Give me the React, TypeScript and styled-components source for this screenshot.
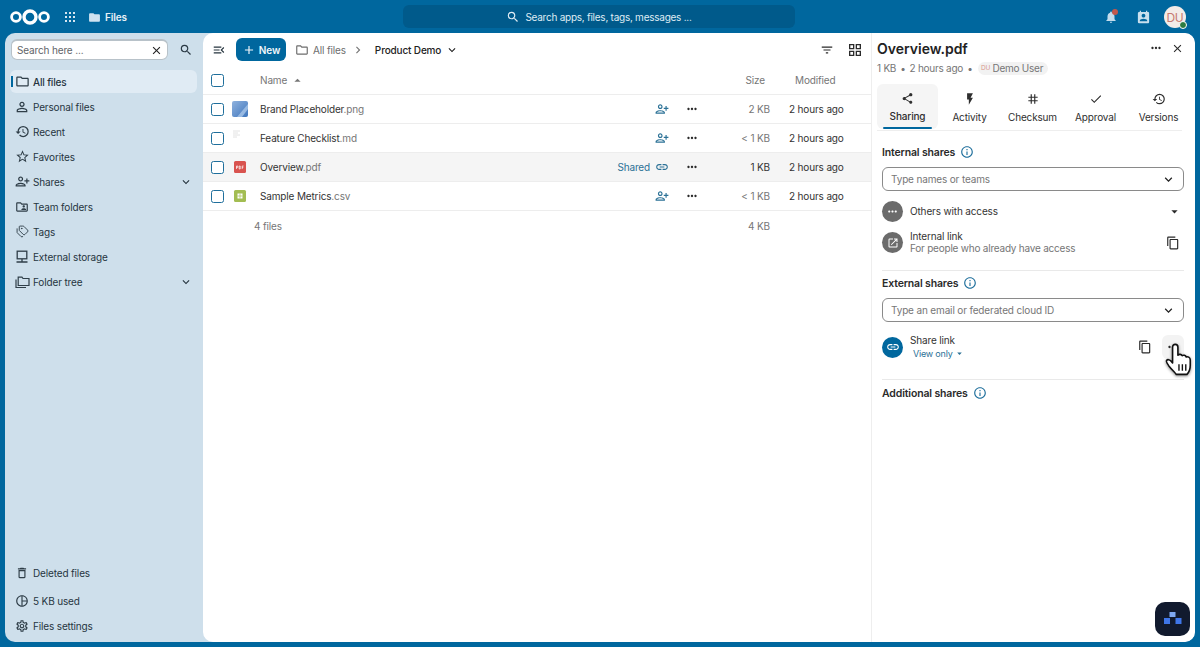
import React from "react";
import styled, { createGlobalStyle } from "styled-components";
import {
  MdAdd, MdArrowDropDown, MdArrowDropUp, MdCheck, MdChevronRight, MdClose, MdContentCopy, MdExpandMore,
  MdFilterList, MdFlashOn, MdHistory, MdInfoOutline, MdLink, MdMenuOpen, MdMoreHoriz, MdNotifications,
  MdOpenInNew, MdOutlineDelete, MdOutlineFolder, MdOutlineFolderShared, MdOutlineGridView, MdOutlinePieChart,
  MdOutlineSettings, MdPermContactCalendar, MdPersonAddAlt, MdPersonOutline, MdRestore, MdSearch, MdShare, MdStarBorder, MdFolder, MdTag,
} from "react-icons/md";
import { Tags } from "lucide-react";

const Global = createGlobalStyle`
  html, body { margin: 0; padding: 0; height: 100%; overflow: hidden; background: #00679e; }
  body { font-family: Inter, "Liberation Sans", sans-serif; font-size: 10px; letter-spacing: -0.15px; color: #222; -webkit-font-smoothing: antialiased; }
  * { box-sizing: border-box; }
`;

const Page = styled.div`
  width: 1200px; height: 647px; display: flex; flex-direction: column;
  background: #00679e; padding: 0 5px 5px; position: relative;
`;
const Header = styled.header`
  height: 33px; flex: none; display: grid; grid-template-columns: 398px 392px 1fr; align-items: center; color: #fff; padding-top: 1px;
`;
const HeaderLeft = styled.div`
  display: flex; align-items: center; padding-left: 5px; height: 100%;
`;
const AppGrid = styled.svg` margin-left: 15px; width: 10px; height: 10px; `;
const FilesFolder = styled.span` display: flex; margin-left: 13px; color: #cfe3f1; `;
const AppName = styled.span` margin-left: 4px; font-size: 10px; font-weight: 600; color: #e8f1f7; `;
const GlobalSearch = styled.div`
  height: 23px; background: #005a8b; border-radius: 6px; display: flex; align-items: center; justify-content: center;
  gap: 5px; color: #dfecf4; font-size: 10px; font-weight: 400; letter-spacing: -0.25px; margin-top: -1px;
`;
const HeaderRight = styled.div`
  display: flex; align-items: center; justify-content: flex-end; height: 100%; padding-right: 9px;
`;
const BellWrap = styled.span`
  position: relative; display: flex; color: #c4dcec; margin-right: 18px;
  &::after { content: ""; position: absolute; right: 0; top: -1px; width: 6px; height: 6px; border-radius: 50%; background: #c1574c; }
`;
const Contacts = styled.span` display: flex; color: #c9e0ee; margin-right: 13px; `;
const Avatar = styled.span`
  position: relative; width: 22px; height: 22px; border-radius: 50%; background: #f3ece8; color: #c77a70;
  display: flex; align-items: center; justify-content: center; font-size: 12px; letter-spacing: -0.3px;
`;
const StatusDot = styled.span`
  position: absolute; right: -1px; bottom: -1px; width: 8px; height: 8px; border-radius: 50%;
  background: #2d7b41; border: 1.5px solid #fff;
`;

const Body = styled.div`
  flex: 1; min-height: 0; display: flex; background: #cedfeb; border-radius: 10px; overflow: hidden;
`;
const Sidebar = styled.aside`
  width: 198px; flex: none; display: flex; flex-direction: column; padding: 6px 6px 5px 5px;
`;
const SearchRow = styled.div` display: flex; align-items: center; height: 21px; margin-left: 1px; `;
const SearchField = styled.div`
  width: 157px; height: 21px; background: #fff; border-radius: 6px; border: 1px solid #b8c2c9; border-top-width: 2px;
  display: flex; align-items: center; justify-content: space-between; padding: 0 4px 0 5px; color: #5f6468; font-size: 10px;
`;
const SearchButton = styled.span` display: flex; margin-left: 11px; color: #2b3a45; `;
const Nav = styled.nav` margin-top: 10px; display: flex; flex-direction: column; gap: 2px; `;
const NavItem = styled.div<{ $active?: boolean }>`
  position: relative; height: 23px; display: flex; align-items: center; padding: 0 4px 0 4px; gap: 3px;
  border-radius: 6px; color: #26353f; font-size: 10px; font-weight: ${p => (p.$active ? 500 : 400)};
  background: ${p => (p.$active ? "#e0ebf4" : "transparent")};
  ${p => p.$active ? `&::before { content: ""; position: absolute; left: 1px; top: 6px; width: 2px; height: 11px; background: #00679e; }` : ""}
`;
const NavIcon = styled.span` width: 16px; height: 16px; display: flex; align-items: center; justify-content: center; color: #2f3e48; flex: none; `;
const NavLabel = styled.span` flex: 1; `;
const NavSpacer = styled.div` flex: 1; `;
const NavFoot = styled.div<{ $gap: number }>` margin-top: ${p => p.$gap}px; `;

const Main = styled.main`
  flex: 1; min-width: 0; display: flex; background: #fff; border-radius: 10px; overflow: hidden;
`;
const Files = styled.section` flex: 1; min-width: 0; display: flex; flex-direction: column; `;
const Toolbar = styled.div`
  height: 33px; flex: none; display: flex; align-items: center; padding: 0 8px 0 9px;
`;
const ToggleBtn = styled.span` display: flex; color: #26353f; margin-right: 10px; `;
const NewButton = styled.span`
  width: 50px; height: 23px; border-radius: 6px; background: #00679e; color: #f1f7fb; display: flex; align-items: center; justify-content: center;
  gap: 3px; font-weight: 600; font-size: 10px;
`;
const Crumb = styled.span<{ $strong?: boolean }>`
  display: flex; align-items: center; gap: 4px; font-size: 10px; color: ${p => (p.$strong ? "#222" : "#6d6d6d")};
  font-weight: ${p => (p.$strong ? 500 : 400)}; margin-left: ${p => (p.$strong ? "10px" : "9px")};
`;
const CrumbSep = styled.span` display: flex; color: #777; margin-left: 5px; `;
const ToolbarSpacer = styled.div` flex: 1; `;
const ToolBtn = styled.span` display: flex; color: #2a2a2a; margin-left: 13px; `;

const rowCols = "29px 28px 1fr 67px 30px 64px 100px";
const HeadRow = styled.div`
  height: 29px; flex: none; display: grid; grid-template-columns: ${rowCols}; align-items: center;
  border-bottom: 1px solid #ededed; color: #767676; font-size: 10px;
`;
const FileRow = styled.div<{ $active?: boolean }>`
  height: 29px; flex: none; display: grid; grid-template-columns: ${rowCols}; align-items: center;
  border-bottom: 1px solid #ededed; background: ${p => (p.$active ? "#f5f5f5" : "#fff")};
`;
const FootRow = styled.div`
  height: 29px; flex: none; display: grid; grid-template-columns: 51px 1fr 64px 100px; align-items: center; color: #767676;
`;
const CheckCell = styled.span` display: flex; justify-content: flex-end; padding-right: 8px; `;
const Check = styled.span` width: 13px; height: 13px; border: 1.5px solid #1f6f9c; border-radius: 2.5px; background: #fff; `;
const ThumbCell = styled.span` display: flex; `;
const NameHead = styled.span` display: flex; align-items: center; gap: 3px; color: #767676; `;
const FileName = styled.span` color: #333; font-size: 10px; `;
const Ext = styled.span` color: #767676; `;
const StatusCell = styled.span`
  display: flex; align-items: center; justify-content: flex-end; gap: 5px; color: #2b7196; padding-right: 8px; font-size: 10px;
`;
const MoreCell = styled.span` display: flex; justify-content: center; color: #2a2a2a; `;
const SizeCell = styled.span<{ $dark?: boolean }>`
  text-align: right; padding-right: 1px; color: ${p => (p.$dark ? "#333" : "#767676")}; font-size: 10px;
`;
const ModCell = styled.span` padding-left: 18px; color: #333; font-size: 10px; `;
const HeadSize = styled.span` text-align: right; padding-right: 6px; `;
const HeadMod = styled.span` padding-left: 24px; `;

const Details = styled.aside`
  width: 324px; flex: none; border-left: 1px solid #eeeeee; display: flex; flex-direction: column; padding: 5px 11px 0 5px;
`;
const TitleRow = styled.div` display: flex; align-items: center; height: 20px; `;
const Title = styled.h1` flex: 1; margin: 0; font-size: 14px; font-weight: 600; letter-spacing: 0; color: #222; `;
const TitleAction = styled.span` display: flex; color: #2a2a2a; margin-left: 8px; `;
const MetaRow = styled.div`
  display: flex; align-items: center; height: 20px; color: #767676; font-size: 10px; gap: 4px; letter-spacing: -0.25px;
`;
const UserChip = styled.span`
  display: flex; align-items: center; gap: 2px; height: 13px; background: #f2f2f2; border-radius: 7px; padding: 0 5px 0 3px; margin-left: 1px;
`;
const MiniDU = styled.span` color: #d99a90; font-size: 6.5px; width: 10px; text-align: center; `;
const Tabs = styled.div`
  display: grid; grid-template-columns: 61px repeat(4, 63px); margin-top: 6px; margin-right: 2px; height: 47px; border-bottom: 1px solid #eee;
`;
const Tab = styled.div<{ $active?: boolean }>`
  position: relative; height: 45px; border-radius: 6px; display: flex; flex-direction: column; align-items: center; padding-top: 8px; gap: 5px;
  font-size: 10px; color: #2f2f2f; font-weight: ${p => (p.$active ? 500 : 400)}; background: ${p => (p.$active ? "#f5f5f5" : "transparent")};
  ${p => p.$active ? `&::after { content: ""; position: absolute; left: 6px; right: 6px; bottom: 0; height: 2px; border-radius: 1px; background: #00679e; }` : ""}
`;
const Section = styled.section<{ $divider?: boolean; $pt: number; $mt?: number }>`
  margin: ${p => p.$mt ?? 0}px 0 0 5px; padding-top: ${p => p.$pt}px; ${p => p.$divider ? "border-top: 1px solid #e9e9e9;" : ""}
`;
const SectionHead = styled.h2`
  margin: 0; display: flex; align-items: center; gap: 5px; height: 16px; font-size: 10.5px; font-weight: 600; color: #2a2a2a;
`;
const InfoIcon = styled.span` display: flex; color: #1f6f9c; `;
const Combo = styled.div`
  height: 24px; margin-top: 7px; border: 1px solid #8a8a8a; border-radius: 6px; display: flex; align-items: center; justify-content: space-between;
  padding: 0 7px 0 8px; color: #767676; font-size: 10px;
`;
const ComboIcon = styled.span` display: flex; color: #222; `;
const ShareRow = styled.div<{ $h: number; $mt?: number }>`
  height: ${p => p.$h}px; margin-top: ${p => p.$mt ?? 0}px; display: flex; align-items: center; gap: 7px;
`;
const Round = styled.span<{ $blue?: boolean }>`
  width: 21px; height: 21px; border-radius: 50%; flex: none; display: flex; align-items: center; justify-content: center; color: #fff;
  background: ${p => (p.$blue ? "#00679e" : "#6b6b6b")};
`;
const ShareText = styled.div` flex: 1; display: flex; flex-direction: column; color: #333; line-height: 11.5px; font-size: 10px; `;
const Sub = styled.span` color: #767676; letter-spacing: -0.22px; `;
const ViewOnly = styled.span` display: flex; align-items: center; gap: 1px; color: #2b7196; margin-top: 2px; margin-left: 3px; font-size: 9px; letter-spacing: -0.2px; `;
const RowIcon = styled.span<{ $mr?: number }>` display: flex; color: #2a2a2a; margin-right: ${p => p.$mr ?? 0}px; `;
const HoverBtn = styled.span`
  width: 22px; height: 24px; border-radius: 6px; background: #f3f3f3; display: flex; align-items: center; justify-content: center; color: #2a2a2a;
`;
const Cursor = styled.svg`
  position: absolute; left: 1164px; top: 343px; width: 31px; height: 33px; filter: drop-shadow(0 1px 1.5px rgba(0,0,0,.45));
`;
const Fab = styled.div`
  position: absolute; left: 1155px; top: 602px; width: 35px; height: 34px; border-radius: 10px; background: #111a2e;
  display: flex; align-items: center; justify-content: center;
`;

const NextcloudLogo = () => (
  <svg width="40" height="20" viewBox="0 0 40 20" aria-hidden="true">
    <g fill="none" stroke="#fff">
      <circle cx="20" cy="10" r="6" strokeWidth="3.4" />
      <circle cx="6" cy="10" r="4.4" strokeWidth="2.8" />
      <circle cx="34" cy="10" r="4.4" strokeWidth="2.8" />
    </g>
  </svg>
);
const DotsGrid = () => (
  <AppGrid viewBox="0 0 10 10" aria-hidden="true">
    {[1, 5, 9].flatMap(y => [1, 5, 9].map(x => <rect key={`${x}-${y}`} x={x - 1} y={y - 1} width="2" height="2" fill="#d5e6f1" />))}
  </AppGrid>
);
const StorageIcon = () => (
  <svg width="14" height="14" viewBox="0 0 14 14" fill="none" stroke="currentColor" strokeWidth="1.3" aria-hidden="true">
    <rect x="2.2" y="1.2" width="9.6" height="7.6" />
    <path d="M7 9v2.5M1.5 12h11" />
  </svg>
);
const TreeIcon = () => (
  <svg width="15" height="14" viewBox="0 0 15 14" fill="none" stroke="currentColor" strokeWidth="1.2" aria-hidden="true">
    <path d="M1 4.5V12.5H11" />
    <path d="M3.2 2.5V10.5H14V3.5H8L7 2.2H3.2Z" />
  </svg>
);
const ImageThumb = () => (
  <svg width="16" height="16" viewBox="0 0 16 16" aria-hidden="true">
    <defs><linearGradient id="bp" x1="0" y1="0" x2="1" y2="1"><stop offset="0" stopColor="#8fb2de" /><stop offset="1" stopColor="#3f76bd" /></linearGradient></defs>
    <rect width="16" height="16" rx="2" fill="url(#bp)" />
    <path d="M5 16 16 3V8L10 16Z" fill="#a8c5e8" opacity=".8" />
  </svg>
);
const MdThumb = () => (
  <svg width="16" height="16" viewBox="0 0 16 16" aria-hidden="true">
    <path d="M1 1h7M1 3h5M1 5h7M1 7h4" stroke="#e2e2e2" strokeWidth="1" />
  </svg>
);
const PdfThumb = () => (
  <svg width="16" height="16" viewBox="0 0 16 16" aria-hidden="true">
    <rect x="2" y="2" width="12" height="12" rx="1.5" fill="#d9534f" />
    <path d="M4.5 7v3M4.5 7h1.3v1.4H4.5M7.2 7v3h1V7zM10.2 10V7h1.4M10.2 8.4h1.1" stroke="#fff" strokeWidth=".7" fill="none" />
  </svg>
);
const CsvThumb = () => (
  <svg width="16" height="16" viewBox="0 0 16 16" aria-hidden="true">
    <rect x="2" y="2" width="12" height="12" rx="1.5" fill="#a3bd52" />
    <rect x="5.5" y="5.5" width="5" height="5" fill="#fff" />
    <path d="M8 5.5v5M5.5 8h5" stroke="#a3bd52" strokeWidth=".7" />
  </svg>
);
const FabLogo = () => (
  <svg width="20" height="16" viewBox="0 0 20 16" aria-hidden="true">
    <rect x="6.5" y="1" width="6" height="5" fill="#7fa8f0" />
    <rect x="1" y="7" width="6" height="6" fill="#3f76e8" />
    <rect x="12.5" y="7" width="6" height="6" fill="#3f76e8" />
  </svg>
);

const navTop: [React.ReactNode, string, boolean?, boolean?][] = [
  [<MdOutlineFolder size={15} />, "All files", true],
  [<MdPersonOutline size={16} />, "Personal files"],
  [<MdHistory size={15} />, "Recent"],
  [<MdStarBorder size={15} />, "Favorites"],
  [<MdPersonAddAlt size={15} />, "Shares", false, true],
  [<MdOutlineFolderShared size={14} />, "Team folders"],
  [<Tags size={13} strokeWidth={1.7} />, "Tags"],
  [<StorageIcon />, "External storage"],
  [<TreeIcon />, "Folder tree", false, true],
];

const files = [
  { thumb: <ImageThumb />, base: "Brand Placeholder", ext: ".png", size: "2 KB" },
  { thumb: <MdThumb />, base: "Feature Checklist", ext: ".md", size: "< 1 KB" },
  { thumb: <PdfThumb />, base: "Overview", ext: ".pdf", size: "1 KB", shared: true },
  { thumb: <CsvThumb />, base: "Sample Metrics", ext: ".csv", size: "< 1 KB" },
];
const tabs: [React.ReactNode, string][] = [
  [<MdShare size={13} />, "Sharing"],
  [<MdFlashOn size={14} />, "Activity"],
  [<MdTag size={14} />, "Checksum"],
  [<MdCheck size={14} />, "Approval"],
  [<MdRestore size={14} />, "Versions"],
];

export default function App() {
  return (
    <>
      <Global />
      <Page>
        <Header>
          <HeaderLeft>
            <NextcloudLogo />
            <DotsGrid />
            <FilesFolder><MdFolder size={13} /></FilesFolder>
            <AppName>Files</AppName>
          </HeaderLeft>
          <GlobalSearch><MdSearch size={14} /><span>Search apps, files, tags, messages ...</span></GlobalSearch>
          <HeaderRight>
            <BellWrap><MdNotifications size={14} /></BellWrap>
            <Contacts><MdPermContactCalendar size={15} /></Contacts>
            <Avatar>DU<StatusDot /></Avatar>
          </HeaderRight>
        </Header>
        <Body>
          <Sidebar>
            <SearchRow>
              <SearchField><span>Search here ...</span><MdClose size={13} color="#222" /></SearchField>
              <SearchButton><MdSearch size={14} /></SearchButton>
            </SearchRow>
            <Nav>
              {navTop.map(([icon, label, active, chevron]) => (
                <NavItem key={label} $active={active}>
                  <NavIcon>{icon}</NavIcon>
                  <NavLabel>{label}</NavLabel>
                  {chevron && <MdExpandMore size={14} />}
                </NavItem>
              ))}
            </Nav>
            <NavSpacer />
            <NavItem><NavIcon><MdOutlineDelete size={14} /></NavIcon><NavLabel>Deleted files</NavLabel></NavItem>
            <NavFoot $gap={5}><NavItem><NavIcon><MdOutlinePieChart size={14} /></NavIcon><NavLabel>5 KB used</NavLabel></NavItem></NavFoot>
            <NavFoot $gap={2}><NavItem><NavIcon><MdOutlineSettings size={14} /></NavIcon><NavLabel>Files settings</NavLabel></NavItem></NavFoot>
          </Sidebar>
          <Main>
            <Files>
              <Toolbar>
                <ToggleBtn><MdMenuOpen size={14} /></ToggleBtn>
                <NewButton><MdAdd size={14} />New</NewButton>
                <Crumb><MdOutlineFolder size={14} />All files</Crumb>
                <CrumbSep><MdChevronRight size={14} /></CrumbSep>
                <Crumb $strong>Product Demo<MdExpandMore size={14} /></Crumb>
                <ToolbarSpacer />
                <ToolBtn><MdFilterList size={14} /></ToolBtn>
                <ToolBtn><MdOutlineGridView size={16} /></ToolBtn>
              </Toolbar>
              <HeadRow>
                <CheckCell><Check /></CheckCell>
                <span />
                <NameHead>Name<MdArrowDropUp size={15} /></NameHead>
                <span /><span />
                <HeadSize>Size</HeadSize>
                <HeadMod>Modified</HeadMod>
              </HeadRow>
              {files.map(f => (
                <FileRow key={f.base} $active={f.shared}>
                  <CheckCell><Check /></CheckCell>
                  <ThumbCell>{f.thumb}</ThumbCell>
                  <FileName>{f.base}<Ext>{f.ext}</Ext></FileName>
                  <StatusCell>
                    {f.shared ? <><span>Shared</span><MdLink size={14} /></> : <MdPersonAddAlt size={14} />}
                  </StatusCell>
                  <MoreCell><MdMoreHoriz size={14} /></MoreCell>
                  <SizeCell $dark={f.shared}>{f.size}</SizeCell>
                  <ModCell>2 hours ago</ModCell>
                </FileRow>
              ))}
              <FootRow>
                <span />
                <span>4 files</span>
                <SizeCell>4 KB</SizeCell>
                <span />
              </FootRow>
            </Files>
            <Details>
              <TitleRow>
                <Title>Overview.pdf</Title>
                <TitleAction><MdMoreHoriz size={14} /></TitleAction>
                <TitleAction><MdClose size={13} /></TitleAction>
              </TitleRow>
              <MetaRow>
                <span>1 KB</span><span>•</span><span>2 hours ago</span><span>•</span>
                <UserChip><MiniDU>DU</MiniDU>Demo User</UserChip>
              </MetaRow>
              <Tabs>
                {tabs.map(([icon, label], i) => (
                  <Tab key={label} $active={i === 0}>{icon}<span>{label}</span></Tab>
                ))}
              </Tabs>
              <Section $pt={13}>
                <SectionHead>Internal shares<InfoIcon><MdInfoOutline size={14} /></InfoIcon></SectionHead>
                <Combo><span>Type names or teams</span><ComboIcon><MdExpandMore size={15} /></ComboIcon></Combo>
                <ShareRow $h={31} $mt={5}>
                  <Round><MdMoreHoriz size={13} /></Round>
                  <ShareText>Others with access</ShareText>
                  <RowIcon $mr={2}><MdArrowDropDown size={15} /></RowIcon>
                </ShareRow>
                <ShareRow $h={31}>
                  <Round><MdOpenInNew size={12} /></Round>
                  <ShareText>Internal link<Sub>For people who already have access</Sub></ShareText>
                  <RowIcon $mr={4}><MdContentCopy size={14} /></RowIcon>
                </ShareRow>
              </Section>
              <Section $divider $pt={4} $mt={12}>
                <SectionHead>External shares<InfoIcon><MdInfoOutline size={14} /></InfoIcon></SectionHead>
                <Combo><span>Type an email or federated cloud ID</span><ComboIcon><MdExpandMore size={15} /></ComboIcon></Combo>
                <ShareRow $h={48} $mt={1}>
                  <Round $blue><MdLink size={14} /></Round>
                  <ShareText>Share link<ViewOnly>View only <MdArrowDropDown size={11} /></ViewOnly></ShareText>
                  <RowIcon $mr={3}><MdContentCopy size={14} /></RowIcon>
                  <HoverBtn><MdMoreHoriz size={14} /></HoverBtn>
                </ShareRow>
              </Section>
              <Section $divider $pt={5} $mt={8}>
                <SectionHead>Additional shares<InfoIcon><MdInfoOutline size={14} /></InfoIcon></SectionHead>
              </Section>
            </Details>
          </Main>
        </Body>
        <Cursor viewBox="0 0 29 31" aria-hidden="true">
          <path d="M8 4C8 2.3 9 1.3 10.5 1.3S13 2.3 13 4V11.5C13.8 10.4 16.2 10.3 17 12C18 11 20.3 11.4 20.8 13.2C22 12.5 24.6 13.2 24.6 16V21C24.6 25 23 28 21.5 29.5H11.5C9.8 27.5 7 24.5 4.5 21.5C3 19.5 1.6 17.6 2.3 16.5C3.1 15.2 5.2 15.5 6.2 16.7L8 18.8Z" fill="#fff" stroke="#111" strokeWidth="1.5" strokeLinejoin="round" />
          <path d="M14 20V26M17.2 20V26M20.4 20V26" stroke="#111" strokeWidth="1.3" />
        </Cursor>
        <Fab><FabLogo /></Fab>
      </Page>
    </>
  );
}
